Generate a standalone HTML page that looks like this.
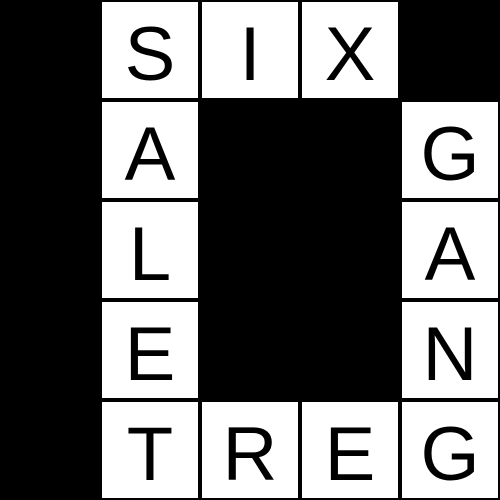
<!DOCTYPE html>
<html style="margin:0;height:500px;overflow:hidden;background:#000"><head><style>
body{margin:0;background:#000;width:500px;height:500px;position:relative;overflow:hidden}
.c{position:absolute;width:96px;height:96px;background:#fff;font-family:"Liberation Sans",sans-serif;font-size:76px;line-height:106px;text-align:center;color:#000;overflow:hidden}
</style></head><body>
<div class="c" style="left:102px;top:2px">S</div>
<div class="c" style="left:202px;top:2px">I</div>
<div class="c" style="left:302px;top:2px">X</div>
<div class="c" style="left:102px;top:102px">A</div>
<div class="c" style="left:102px;top:202px">L</div>
<div class="c" style="left:102px;top:302px">E</div>
<div class="c" style="left:102px;top:402px">T</div>
<div class="c" style="left:202px;top:402px">R</div>
<div class="c" style="left:302px;top:402px">E</div>
<div class="c" style="left:402px;top:402px">G</div>
<div class="c" style="left:402px;top:102px">G</div>
<div class="c" style="left:402px;top:202px">A</div>
<div class="c" style="left:402px;top:302px">N</div>
</body></html>
